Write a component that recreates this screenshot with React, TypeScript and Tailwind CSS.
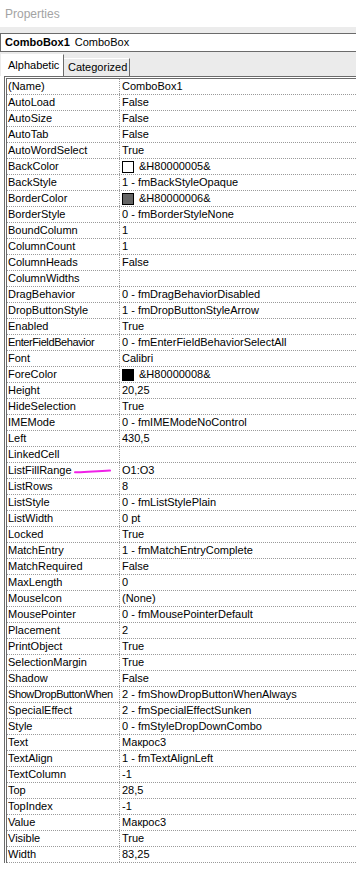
import React from "react";

type Row = [string, string, string?];

const rows: Row[] = [
  ["(Name)", "ComboBox1"],
  ["AutoLoad", "False"],
  ["AutoSize", "False"],
  ["AutoTab", "False"],
  ["AutoWordSelect", "True"],
  ["BackColor", "&H80000005&", "#ffffff"],
  ["BackStyle", "1 - fmBackStyleOpaque"],
  ["BorderColor", "&H80000006&", "#646464"],
  ["BorderStyle", "0 - fmBorderStyleNone"],
  ["BoundColumn", "1"],
  ["ColumnCount", "1"],
  ["ColumnHeads", "False"],
  ["ColumnWidths", ""],
  ["DragBehavior", "0 - fmDragBehaviorDisabled"],
  ["DropButtonStyle", "1 - fmDropButtonStyleArrow"],
  ["Enabled", "True"],
  ["EnterFieldBehavior", "0 - fmEnterFieldBehaviorSelectAll"],
  ["Font", "Calibri"],
  ["ForeColor", "&H80000008&", "#000000"],
  ["Height", "20,25"],
  ["HideSelection", "True"],
  ["IMEMode", "0 - fmIMEModeNoControl"],
  ["Left", "430,5"],
  ["LinkedCell", ""],
  ["ListFillRange", "O1:O3"],
  ["ListRows", "8"],
  ["ListStyle", "0 - fmListStylePlain"],
  ["ListWidth", "0 pt"],
  ["Locked", "True"],
  ["MatchEntry", "1 - fmMatchEntryComplete"],
  ["MatchRequired", "False"],
  ["MaxLength", "0"],
  ["MouseIcon", "(None)"],
  ["MousePointer", "0 - fmMousePointerDefault"],
  ["Placement", "2"],
  ["PrintObject", "True"],
  ["SelectionMargin", "True"],
  ["Shadow", "False"],
  ["ShowDropButtonWhen", "2 - fmShowDropButtonWhenAlways"],
  ["SpecialEffect", "2 - fmSpecialEffectSunken"],
  ["Style", "0 - fmStyleDropDownCombo"],
  ["Text", "Макрос3"],
  ["TextAlign", "1 - fmTextAlignLeft"],
  ["TextColumn", "-1"],
  ["Top", "28,5"],
  ["TopIndex", "-1"],
  ["Value", "Макрос3"],
  ["Visible", "True"],
  ["Width", "83,25"],
];

export default function App() {
  return (
    <div
      className="h-[884px] w-[356px] overflow-hidden bg-white text-[11px] text-black"
      style={{ fontFamily: '"Liberation Sans", Arial, sans-serif' }}
    >
      <div className="flex h-[27px] items-center pl-[5px] text-[12px] text-[#a3a3a3]">Properties</div>
      <div className="h-[6px] bg-[#ececec]" />

      <div className="flex h-[19px] items-center gap-[5px] border-y border-l border-[#6b6b6b] pl-[4px]">
        <span className="font-bold">ComboBox1</span>
        <span>ComboBox</span>
      </div>

      <div className="flex h-[24px] items-end bg-[#ebebeb] pl-[1px]">
        <div className="flex h-[22px] w-[63px] items-center border-l border-t border-r border-l-white border-t-white border-r-[#6b6b6b] bg-white pl-[6px]">
          Alphabetic
        </div>
        <div className="flex h-[18px] w-[66px] items-center border-t border-r border-t-white border-r-[#6b6b6b] bg-[#ebebeb] pl-[4px]">
          Categorized
        </div>
      </div>

      <div className="ml-[4px] border-l-[3px] border-t-[3px] border-double border-[#6b6b6b]">
        {rows.map(([name, value, swatch]) => (
          <div key={name} className="flex h-4 border-b border-dotted border-[#9a9a9a]">
            <div
              className={`relative flex w-[113px] shrink-0 items-center overflow-hidden whitespace-nowrap border-r border-dotted border-[#9a9a9a] pl-px ${
                name.length > 16 ? "tracking-[-0.4px]" : ""
              }`}
            >
              {name}
              {name === "ListFillRange" && (
                <svg className="absolute left-[67px] top-[6px]" width="38" height="5" viewBox="0 0 38 5">
                  <path d="M1 3.2 C 10 3.6, 20 2.2, 36 1.6" stroke="#f020e8" strokeWidth="2" fill="none" strokeLinecap="round" />
                </svg>
              )}
            </div>
            <div className="flex items-center gap-[5px] whitespace-nowrap pl-[2px]">
              {swatch && <span className="h-3 w-3 border border-black" style={{ background: swatch }} />}
              {value}
            </div>
          </div>
        ))}
      </div>
    </div>
  );
}
